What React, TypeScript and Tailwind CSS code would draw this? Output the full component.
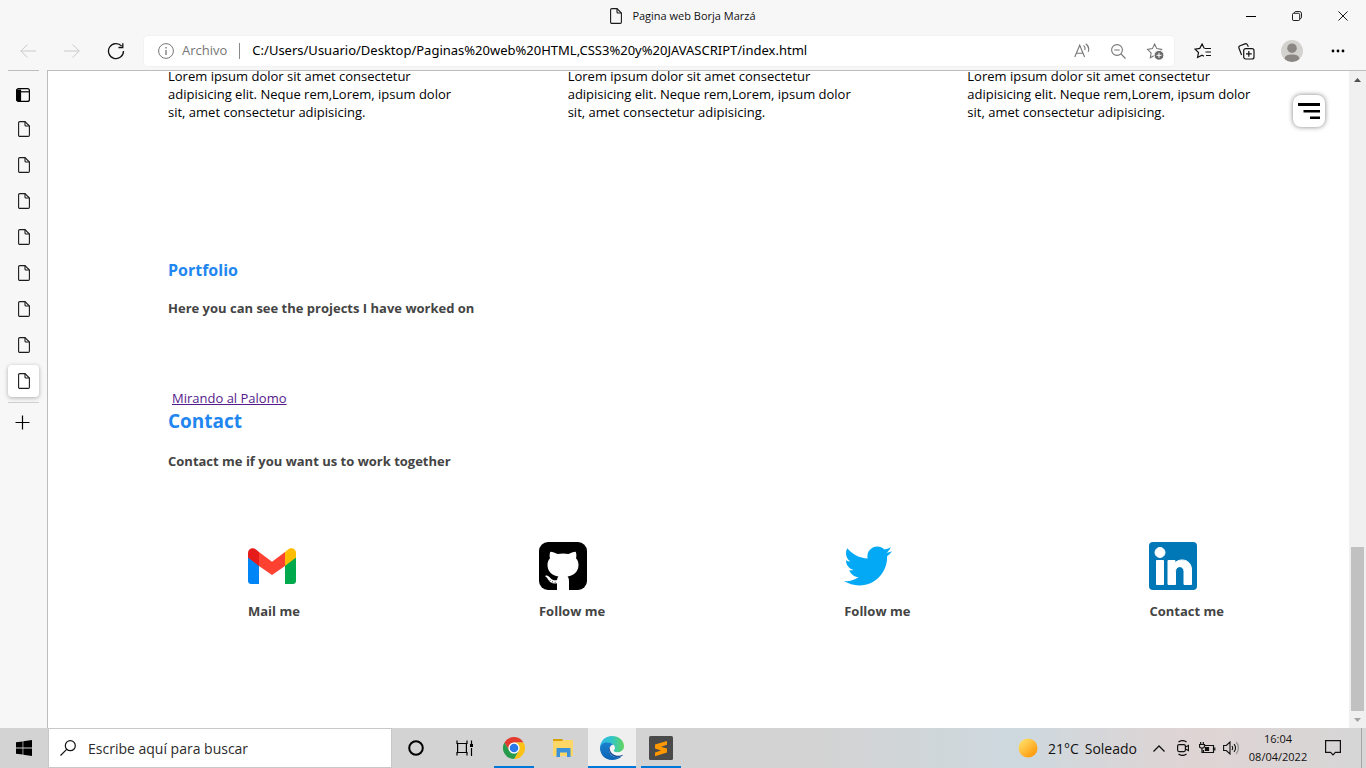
import type { ReactNode } from "react";
import { FaTwitter } from "react-icons/fa";

const DocIcon = () => (
  <svg width="12" height="16" viewBox="0 0 12 16" fill="none" stroke="#1b1b1b" strokeWidth="1.1" aria-hidden="true">
    <path d="M1.9.6H7L11.4 5v9.2c0 .7-.5 1.2-1.2 1.2H1.8c-.7 0-1.2-.5-1.2-1.2V1.8C.6 1.100 1.100.6 1.900.6Z" />
    <path d="M7 .6V4c0 .6.400 1 1 1h3.400" />
  </svg>
);

const IconButton = ({ label, children, className = "" }: { label: string; children: ReactNode; className?: string }) => (
  <button type="button" aria-label={label} className={`flex shrink-0 items-center justify-center ${className}`}>
    {children}
  </button>
);

const TitleBar = () => (
  <header className="flex h-8 items-center">
    <div className="w-[138px] shrink-0" />
    <div className="flex flex-1 items-center justify-center gap-2.5">
      <DocIcon />
      <span className="text-[11px]">Pagina web Borja Marzá</span>
    </div>
    <div className="flex shrink-0">
      <IconButton label="Minimizar" className="h-8 w-[46px]">
        <svg width="10" height="10" viewBox="0 0 10 10" stroke="#000"><path d="M0 5.500h10" /></svg>
      </IconButton>
      <IconButton label="Restaurar" className="h-8 w-[46px]">
        <svg width="10" height="10" viewBox="0 0 11 11" fill="none" stroke="#000">
          <rect x=".5" y="2.500" width="8" height="8" rx="1.500" />
          <path d="M2.500 2.200C2.700 1.100 3.300.5 4.500.5H8A2.500 2.500 0 0 1 10.500 3v3.500c0 1.200-.6 1.800-1.700 2" />
        </svg>
      </IconButton>
      <IconButton label="Cerrar" className="h-8 w-[46px]">
        <svg width="10" height="10" viewBox="0 0 11 11" stroke="#000"><path d="m.5.5 10 10m0-10-10 10" /></svg>
      </IconButton>
    </div>
  </header>
);

const starPath = "m7.500 1 2 4.200 4.500.7-3.300 3.200.8 4.600-4-2.200-4 2.200.8-4.600L1 5.900l4.500-.7Z";

const Toolbar = () => (
  <nav aria-label="Navegación" className="flex h-[38px] items-center">
    <div className="flex w-36 shrink-0 items-center pl-2">
      <IconButton label="Atrás" className="h-8 w-10">
        <svg width="16" height="14" viewBox="0 0 16 14" fill="none" stroke="#cacaca"><path d="M16 7H.8M7.500.5.8 7l6.700 6.500" /></svg>
      </IconButton>
      <IconButton label="Adelante" className="ml-1 h-8 w-10">
        <svg width="16" height="14" viewBox="0 0 16 14" fill="none" stroke="#cacaca"><path d="M0 7h15.200M8.500.5 15.200 7l-6.700 6.500" /></svg>
      </IconButton>
      <IconButton label="Actualizar" className="ml-1 h-8 w-10">
        <svg width="18" height="18" viewBox="0 0 18 18" fill="none" stroke="#111" strokeWidth="1.300">
          <path d="M14.700 4.200A7.500 7.500 0 1 0 16.500 9" /><path d="M15.800 1.200v4.300h-4.300" />
        </svg>
      </IconButton>
    </div>
    <div className="flex h-[30px] min-w-0 flex-1 items-center rounded bg-white pl-3.5 shadow-[0_0_2px_rgba(0,0,0,0.08)]">
      <svg className="shrink-0" width="16" height="16" viewBox="0 0 16 16" fill="none" stroke="#767676" aria-hidden="true">
        <circle cx="8" cy="8" r="7.400" /><path d="M8 7v5M8 4v1.500" strokeWidth="1.300" />
      </svg>
      <span className="ml-2 text-[13px] text-[#767676]">Archivo</span>
      <span className="ml-3 mr-3 h-4 w-px shrink-0 bg-[#8a8a8a]" />
      <input
        aria-label="Dirección"
        className="min-w-0 flex-1 bg-transparent font-['Noto_Sans',sans-serif] text-[13px] text-black outline-none"
        defaultValue="C:/Users/Usuario/Desktop/Paginas%20web%20HTML,CSS3%20y%20JAVASCRIPT/index.html"
      />
      <IconButton label="Leer en voz alta" className="h-7 w-9">
        <svg width="16" height="16" viewBox="0 0 16 16" fill="none" stroke="#767676" strokeWidth="1.100">
          <path d="M.8 14 5.700 2.200 10.600 14M2.400 10.200h6.600M9.500 2.500c1.400 1 1.800 2.800 1.200 4.500M11.700.7c2.800 2 3.600 5 2.500 8" />
        </svg>
      </IconButton>
      <IconButton label="Alejar" className="h-7 w-9">
        <svg width="15" height="15" viewBox="0 0 15 15" fill="none" stroke="#767676" strokeWidth="1.100">
          <circle cx="6" cy="6" r="5.400" /><path d="M3.300 6h5.400M10 10l4.500 4.500" />
        </svg>
      </IconButton>
      <IconButton label="Agregar a favoritos" className="h-7 w-[38px]">
        <svg width="18" height="17" viewBox="0 0 18 17" fill="none" stroke="#767676">
          <path d={starPath} transform="translate(.5 0) scale(1.080)" />
          <circle cx="13" cy="12.300" r="4.900" fill="#6a6a6a" stroke="#fff" /><path d="M10.500 12.300h5M13 9.800v5" stroke="#fff" />
        </svg>
      </IconButton>
    </div>
    <div className="flex w-48 shrink-0 items-center pl-[6px]">
      <IconButton label="Favoritos" className="h-8 w-11">
        <svg width="17" height="16" viewBox="0 0 17 16" fill="none" stroke="#111" strokeWidth="1.200">
          <path d="M10.500 5.500H17M11.500 9H17M12 12.500h5M10.200 5.300 8.100 1 5.800 5.400 1 6.100l3.500 3.400-.9 5L8 12.200l2 1" />
        </svg>
      </IconButton>
      <IconButton label="Colecciones" className="h-8 w-11">
        <svg width="17" height="17" viewBox="0 0 17 17" fill="none" stroke="#111" strokeWidth="1.200">
          <rect x="5.700" y="5.700" width="10.300" height="10.300" rx="2" />
          <path d="M10.800 8v5.700M8 10.800h5.700M3.600 12 1 5.300C.6 4.200 1 3.200 2 2.800L7 .9c1-.4 2 0 2.500 1l.8 2" />
        </svg>
      </IconButton>
      <IconButton label="Perfil" className="h-8 w-12">
        <svg width="22" height="22" viewBox="0 0 22 22">
          <clipPath id="avatar"><circle cx="11" cy="11" r="11" /></clipPath>
          <g clipPath="url(#avatar)"><path fill="#d4d2cf" d="M0 0h22v22H0z" /><circle cx="11" cy="8.200" r="4.800" fill="#8b8785" /><path d="M3.500 19c.5-3.600 3.200-4.500 7.500-4.500s7 .9 7.500 4.500c-2 2-4.500 3-7.500 3s-5.500-1-7.500-3Z" fill="#8b8785" /></g>
        </svg>
      </IconButton>
      <IconButton label="Configuración y más" className="h-8 w-11">
        <svg width="14" height="4" viewBox="0 0 14 4"><circle cx="2" cy="2" r="1.400" /><circle cx="7" cy="2" r="1.400" /><circle cx="12" cy="2" r="1.400" /></svg>
      </IconButton>
    </div>
  </nav>
);

const Sidebar = () => (
  <aside className="flex w-[47px] shrink-0 flex-col items-center">
    <div className="h-px w-[31px] bg-[#bdbdbd]" />
    <IconButton label="Pestañas verticales" className="mt-2 h-8 w-[31px] pr-px">
      <svg width="14" height="14" viewBox="0 0 14 14" fill="none" stroke="#000" strokeWidth="1.200">
        <rect x=".6" y=".6" width="12.800" height="12.800" rx="2" /><path d="M4.500 3.800h9" /><path d="M1 2h3.500v11H2L1 12Z" fill="#000" />
      </svg>
    </IconButton>
    <div className="flex flex-col gap-1 pt-0.5">
      {Array.from({ length: 8 }, (_, i) => (
        <IconButton
          key={i}
          label={`Pestaña ${i + 1}`}
          className={i === 7 ? "h-8 w-[31px] rounded bg-white pl-px shadow-[0_1px_4px_rgba(0,0,0,0.3)]" : "h-8 w-[31px] pl-px"}
        >
          <DocIcon />
        </IconButton>
      ))}
    </div>
    <div className="mt-[5px] h-px w-[31px] bg-[#cfcfcf]" />
    <IconButton label="Nueva pestaña" className="mt-1 h-[30px] w-[31px] pr-0.5">
      <svg width="15" height="15" viewBox="0 0 15 15" stroke="#000" strokeWidth="1.200"><path d="M7.500.5v14M.5 7.500h14" /></svg>
    </IconButton>
  </aside>
);

const GmailLogo = () => (
  <svg width="48" height="48" viewBox="0 0 48 48" aria-hidden="true">
    <path fill="#0085f7" d="M0 15v24c0 1.700 1.300 3 3 3h8V22Z" />
    <path fill="#00a94b" d="M48 15v24c0 1.700-1.300 3-3 3h-8V22Z" />
    <path fill="#ff4131" d="M11 10v14l13 9 13-9V10l-13 9.700Z" />
    <path fill="#e51c19" d="M0 11v4.500L11 24V10L8 7.600C5 5 0 6.500 0 11Z" />
    <path fill="#ffbc00" d="M48 11v4.500L37 24V10l3-2.400C43 5 48 6.500 48 11Z" />
  </svg>
);

const GithubLogo = () => (
  <svg width="48" height="48" viewBox="0 0 48 48" aria-hidden="true">
    <rect width="48" height="48" rx="9" />
    <path
      fill="#fff"
      d="M11.300 9.800c2.500.1 5 1 7.200 2.300 3.500-.8 7.500-.8 11 0 2.200-1.300 4.700-2.200 7.200-2.300.8 2.200.9 4.500.3 6.500 1.800 2 2.600 4.300 2.500 7.300-.3 6.500-4.700 10-10.900 10.900 1 1.200 1.400 2.500 1.400 4.500v9H18v-6.800c-4.500.7-7-.5-8.600-3.300-.8-1.400-1.500-2.500-2.800-3.200-.8-.7-.1-1.500 1.300-1.100 1.700.5 2.800 1.700 3.900 3 1.700 1.700 3.700 2.100 6.200 1.500.2-1.500.6-2.700 1.400-3.600C13.200 33.600 8.800 30.100 8.500 23.600c-.1-3 .7-5.300 2.500-7.300-.6-2-.5-4.300.3-6.500Z"
    />
    <path d="m10.500 39.500 1-1.500m1.500 2.800.7-1.700m2.300 2.200.2-1.700" stroke="#000" strokeWidth=".6" />
  </svg>
);

const LinkedinLogo = () => (
  <svg width="48" height="48" viewBox="0 0 48 48" aria-hidden="true">
    <rect width="48" height="48" rx="4" fill="#0077b7" />
    <g fill="#fff" stroke="#fff" strokeLinejoin="round">
      <circle cx="11" cy="10.500" r="5" />
      <rect x="7.500" y="18.500" width="7" height="24" />
      <path d="M19 18.500h7v2.500c4-5 16.500-4.500 16.500 7v14.500H35V29.500c0-6.500-8.500-6.500-8.500 0v13H19Z" />
    </g>
  </svg>
);

const blurb = "Lorem ipsum dolor sit amet consectetur adipisicing elit. Neque rem,Lorem, ipsum dolor sit, amet consectetur adipisicing.";

const contacts = [
  { text: "Mail me", logo: <GmailLogo /> },
  { text: "Follow me", logo: <GithubLogo /> },
  { text: "Follow me", logo: <FaTwitter size={48} color="#03a9f4" aria-hidden="true" /> },
  { text: "Contact me", logo: <LinkedinLogo /> },
];

const WebPage = () => (
  <main className="min-w-0 flex-1 bg-white text-[13px] leading-[18px] text-black">
    <div className="relative -mt-1 grid grid-cols-3 gap-[110px] pr-[92px] pl-[120px]">
      {[0, 1, 2].map((i) => (
        <p key={i}>{blurb}</p>
      ))}
      <button
        type="button"
        aria-label="Menú"
        className="absolute top-7 right-6 flex h-8 w-8 items-center justify-center rounded-lg bg-white shadow-[0_0_5px_rgba(0,0,0,0.5)]"
      >
        <svg width="22" height="18" viewBox="0 0 22 18"><path d="M0 1h22v3H0zM5.500 8H22v2.500H5.500zM12 14.500h10V17H12z" /></svg>
      </button>
    </div>
    <section className="mt-[137px] pl-[120px]">
      <h2 className="text-[16px] leading-6 font-bold text-[#2286f0]">Portfolio</h2>
      <p className="mt-[17px] font-bold text-[#444]">Here you can see the projects I have worked on</p>
      <div className="mt-[72px] pl-1">
        <a href="#palomo" className="text-[#551a8b] underline">Mirando al Palomo</a>
      </div>
    </section>
    <section>
      <div className="pl-[120px]">
        <h2 className="text-[19px] leading-7 font-bold text-[#2286f0]">Contact</h2>
        <p className="mt-[17px] font-bold text-[#444]">Contact me if you want us to work together</p>
      </div>
      <div className="mt-[72px] flex justify-between pr-[125px] pb-[108px] pl-[200px]">
        {contacts.map((c, i) => (
          <a key={i} href="#contact" className="flex flex-col gap-3 font-bold text-[#444]">
            {c.logo}
            <span>{c.text}</span>
          </a>
        ))}
      </div>
    </section>
  </main>
);

const Scrollbar = () => (
  <div aria-hidden="true" className="flex w-[17px] shrink-0 flex-col items-center bg-[#f0f0f0]">
    <div className="flex h-[17px] items-center">
      <svg width="7" height="4" viewBox="0 0 7 4"><path d="M0 4 3.500 0 7 4Z" fill="#505050" /></svg>
    </div>
    <div className="flex-1" />
    <div className="h-[164px] w-[13px] bg-[#c1c1c1]" />
    <div className="flex h-[17px] items-center">
      <svg width="7" height="4" viewBox="0 0 7 4"><path d="m0 0 3.500 4L7 0Z" fill="#a3a3a3" /></svg>
    </div>
  </div>
);

const ChromeLogo = () => (
  <svg width="22" height="22" viewBox="0 0 48 48">
    <path fill="#e33b2e" d="M3.200 12a24 24 0 0 1 41.600 0H24a12 12 0 0 0-10.400 18Z" />
    <path fill="#fbc116" d="M44.800 12A24 24 0 0 1 24 48l10.400-18A12 12 0 0 0 24 12Z" />
    <path fill="#269b4b" d="M24 48A24 24 0 0 1 3.200 12l10.400 18a12 12 0 0 0 20.800 0Z" />
    <circle cx="24" cy="24" r="12" fill="#fff" /><circle cx="24" cy="24" r="9.400" fill="#2b79e8" />
  </svg>
);

const FolderLogo = () => (
  <svg width="22" height="20" viewBox="0 0 22 20">
    <path fill="#d9a006" d="M1 1h9l2 2.500V6H1Z" /><path fill="#fcd667" d="M1 3h9l2-1h9v16H1Z" />
    <path fill="#3b92d8" d="M4.500 19v-8c0-.6.400-1 1-1h12c.6 0 1 .4 1 1v8H15v-4.500H8V19Z" />
  </svg>
);

const EdgeLogo = () => (
  <svg width="24" height="24" viewBox="0 0 24 24">
    <defs>
      <linearGradient id="edgeTop" x1="0" x2="1"><stop stopColor="#2eb7ea" /><stop offset=".5" stopColor="#31c5c6" /><stop offset="1" stopColor="#62d55b" /></linearGradient>
      <linearGradient id="edgeLeft" x1="0" y1="0" x2="0" y2="1"><stop stopColor="#1b80ce" /><stop offset="1" stopColor="#0a63b5" /></linearGradient>
    </defs>
    <path fill="url(#edgeTop)" d="M0 12C0 5 5 0 12 0c7 0 12 4.800 12 10 0 4-3 6.500-6.500 6.500-2.600 0-4-1-4-1.900 0-.7 1.300-1.100 1.300-3.100 0-2.700-2.800-4.500-6.300-4.500C4.500 7 .8 9 0 12Z" />
    <path fill="url(#edgeLeft)" d="M0 12c.4-3.500 3.500-5.500 7-5.500 2.500 0 5 .8 6.500 2.200-2.400 0-4.500 2-4.500 5 0 4.500 4 7.700 9 7.500 1.300 0 2.600-.5 3.800-1C19.500 22.700 16 24 12 24 5 24 0 18.500 0 12Z" />
    <path fill="#124c94" d="M9 13.700c0 4.300 4 7.500 9 7.500 2 0 3.500-.8 4.500-1.600.5-.6.200-1-.6-.7-4.900 2-10.900-.3-12-5.200-.5-2 .3-3.800 1.500-4.500C10 10 9 11.700 9 13.700Z" />
    <path fill="#f4f6f7" d="M14.800 11.500c0 2-1.300 2.400-1.300 3.100 0 .9 1.400 1.900 4 1.900 2.200 0 4.200-1 5.300-2.500.6 1.500.3 3.200-.5 4.600-4.300 2.300-9.800.2-11.400-4.400-.6-2.200.2-4.200 2.100-4.900.9.400 1.600 1.200 1.800 2.200Z" />
  </svg>
);

const SublimeLogo = () => (
  <svg width="24" height="24" viewBox="0 0 24 24">
    <rect width="24" height="24" rx="1.500" fill="#4a4a4a" />
    <path fill="#ff9800" d="m18 5-12 3.600v4l6 1.900-6 1.900v3.800l12-3.700v-4l-6-1.800 6-1.900Z" />
  </svg>
);

const apps = [
  { label: "Cortana", state: "", icon: <svg width="16" height="16" viewBox="0 0 16 16"><circle cx="8" cy="8" r="6.800" fill="none" stroke="#000" strokeWidth="2" /></svg> },
  { label: "Vista de tareas", state: "", icon: <svg width="18" height="16" viewBox="0 0 18 16" fill="none" stroke="#000" strokeWidth="1.200"><path d="M1 .5v3h10v-3M1 15.500v-3h10v3M1.600 3.500v9M10.400 3.500v9M15.500.5v3.500M15.500 8v8" /><path d="M14 4h3v3h-3z" fill="#000" stroke="none" /></svg> },
  { label: "Chrome", state: "run", icon: <ChromeLogo /> },
  { label: "Explorador de archivos", state: "", icon: <FolderLogo /> },
  { label: "Edge", state: "active", icon: <EdgeLogo /> },
  { label: "Sublime Text", state: "run", icon: <SublimeLogo /> },
];

const Taskbar = () => (
  <footer className="flex h-10 shrink-0 items-stretch bg-linear-to-r from-[#d3d3d3] from-60% via-[#cdd9df] via-75% to-[#d6d6d6]">
    <IconButton label="Inicio" className="w-12">
      <svg width="16" height="16" viewBox="0 0 16 16"><path d="m0 2.300 6.600-.9v6.200H0ZM7.300 1.300 16 0v7.600H7.300ZM0 8.400h6.600v6.200L0 13.700ZM7.300 8.400H16V16l-8.700-1.300Z" /></svg>
    </IconButton>
    <label className="flex w-[344px] shrink-0 items-center border border-[#c8c8c8] bg-white pl-[11px]">
      <svg width="16" height="16" viewBox="0 0 16 16" fill="none" stroke="#111" strokeWidth="1.200" aria-hidden="true">
        <circle cx="10.300" cy="5.700" r="5" /><path d="M6.700 9.300.5 15.500" />
      </svg>
      <input aria-label="Buscar" placeholder="Escribe aquí para buscar" className="ml-3 min-w-0 flex-1 bg-transparent text-[14px] outline-none placeholder:text-[#2b2b2b]" />
    </label>
    <div className="flex gap-px">
      {apps.map((a) => (
        <button
          key={a.label}
          type="button"
          aria-label={a.label}
          className={
            a.state === "active"
              ? "flex w-12 items-center justify-center border-b-2 border-[#0078d7] bg-[#efefef] pt-0.5"
              : "flex w-12 flex-col items-center justify-center"
          }
        >
          {a.state === "run" ? (
            <span className="flex h-full w-10 items-center justify-center border-b-2 border-[#0078d7] pt-0.5">{a.icon}</span>
          ) : (
            a.icon
          )}
        </button>
      ))}
    </div>
    <div className="flex flex-1 items-center justify-end bg-linear-to-r from-transparent from-50% via-[#dfd4d4] via-75% to-[#d6d6d6]">
      <button type="button" className="flex items-center text-[14px]">
        <svg width="20" height="20" viewBox="0 0 20 20" aria-hidden="true">
          <defs><linearGradient id="sun" x1=".1" y1=".1" x2=".8" y2=".9"><stop stopColor="#ffe06a" /><stop offset="1" stopColor="#ff9a0a" /></linearGradient></defs>
          <circle cx="10" cy="10" r="9.500" fill="url(#sun)" />
        </svg>
        <span className="ml-2.5">21°C</span>
        <span className="ml-1.5">Soleado</span>
      </button>
      <IconButton label="Mostrar iconos ocultos" className="ml-2.5 h-10 w-6">
        <svg width="12" height="7" viewBox="0 0 12 7" fill="none" stroke="#111" strokeWidth="1.300"><path d="m.5 6.500 5.500-5.500 5.500 5.500" /></svg>
      </IconButton>
      <IconButton label="Reunirse ahora" className="h-10 w-6">
        <svg width="12" height="16" viewBox="0 0 12 16" fill="none" stroke="#111" strokeWidth="1.200"><rect x=".6" y="4.600" width="7.800" height="7" rx="1.500" /><path d="m8.500 7 3-1.500v5L8.500 9M1.500 2c2.500-1.800 5.500-1.800 8 0M1.500 14c2.500 1.800 5.500 1.800 8 0" /></svg>
      </IconButton>
      <IconButton label="Batería" className="h-10 w-6">
        <svg width="17" height="12" viewBox="0 0 17 12" fill="none" stroke="#111" strokeWidth="1.200"><path d="M6 3.500h8.500v7h-10V8M15.800 5.500v3M.5 2.500h5v1.700c0 1.200-1 2-2.500 2S.5 5.400.5 4.200ZM1.700 2.500V0M4.300 2.500V0M3 6v4.500h1.500" /><path d="M6.500 5.500h3v3h-3z" fill="#111" /></svg>
      </IconButton>
      <IconButton label="Volumen" className="h-10 w-6">
        <svg width="17" height="14" viewBox="0 0 17 14" fill="none" stroke="#111" strokeWidth="1.100"><path d="M.6 4.500h2.700L7 1v12L3.300 9.500H.6ZM9 5c.8 1.200.8 2.800 0 4M11 3.200c1.800 2.200 1.800 5.400 0 7.600" /><path d="M13.300 1.200c2.800 3.400 2.800 8.200 0 11.600" stroke="#888" /></svg>
      </IconButton>
      <button type="button" className="ml-1 flex w-[62px] flex-col items-center text-[11px] leading-[18px]">
        <time>16:04</time>
        <time>08/04/2022</time>
      </button>
      <IconButton label="Notificaciones" className="h-10 w-12">
        <svg width="16" height="16" viewBox="0 0 16 16" fill="none" stroke="#111" strokeWidth="1.200"><path d="M.6.6h14.800v11.800h-5L8 14.800l-2.400-2.400h-5Z" /></svg>
      </IconButton>
      <div className="ml-1 h-10 w-[5px] border-l border-[#a5a5a5]" />
    </div>
  </footer>
);

export default function App() {
  return (
    <div className="flex min-h-screen flex-col bg-[#f7f7f7] font-['Open_Sans','Noto_Sans',sans-serif] text-[#111]">
      <TitleBar />
      <Toolbar />
      <div className="flex flex-1">
        <Sidebar />
        <div className="flex min-w-0 flex-1 border-t border-l border-[#bdbdbd]">
          <WebPage />
          <Scrollbar />
        </div>
      </div>
      <Taskbar />
    </div>
  );
}
